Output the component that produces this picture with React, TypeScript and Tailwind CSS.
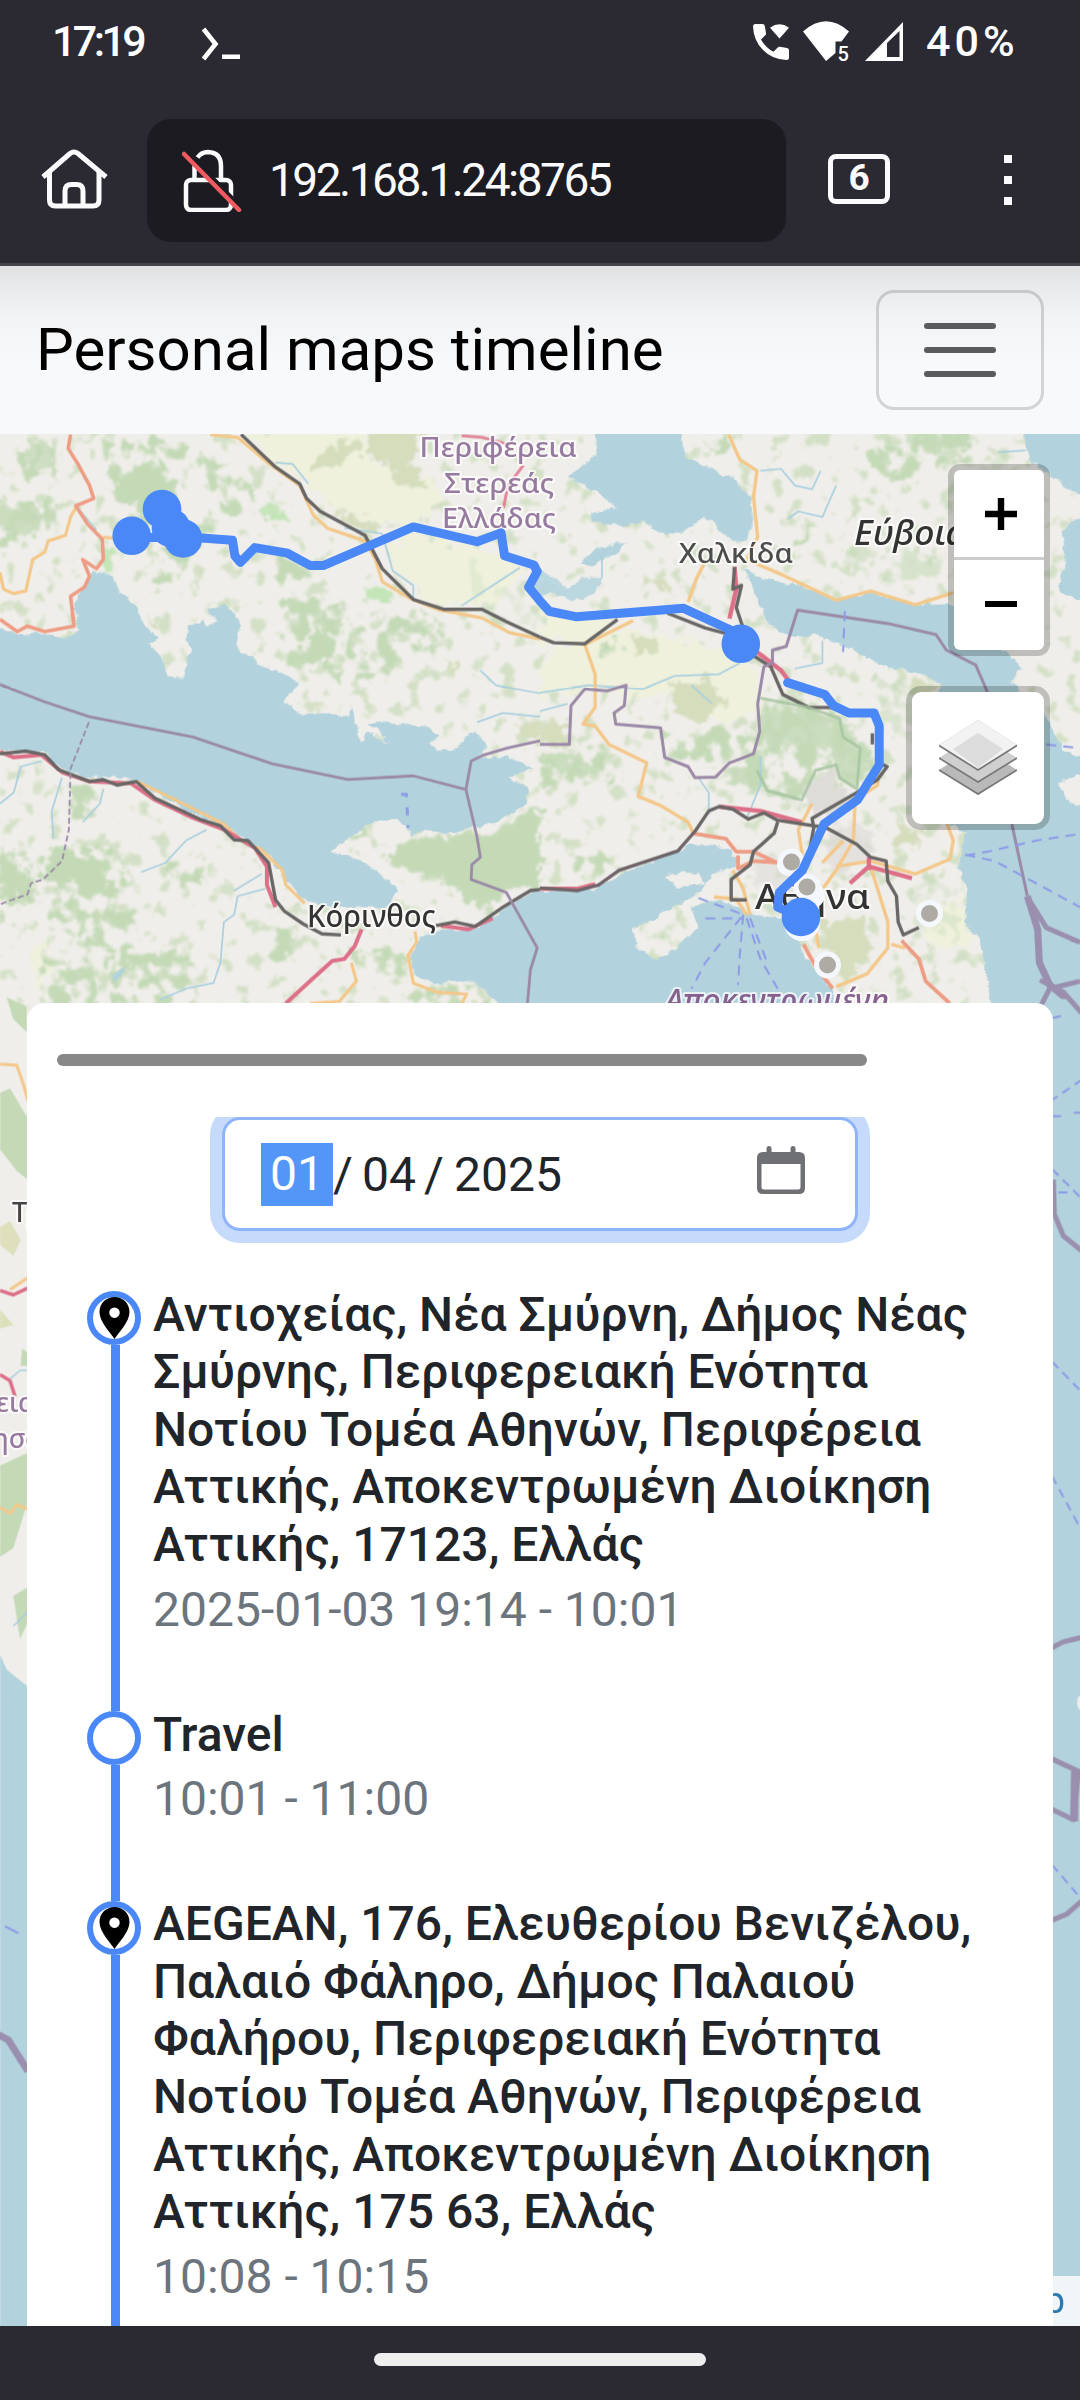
import React from "react";

const WATER = "#b2d2dd";
const LAND = "#f0eeea";
const WOOD = "#c4dab7";
const FIELD = "#eff1dc";
const SCRUB = "#d5ddbd";
const ORANGE = "#f3c88a";
const RED = "#dd7088";
const CORAL = "#ee9d85";
const RAIL = "#696666";
const ADMIN = "#9b89a8";
const FERRY = "#8c9ae8";
const BLUE = "#4b88f7";

type LineProps = { d: string; c: string; w: number; dash?: string; o?: number };

function Line({ d, c, w, dash, o }: LineProps) {
  return (
    <path
      d={d}
      fill="none"
      stroke={c}
      strokeWidth={w}
      strokeDasharray={dash}
      opacity={o}
      strokeLinejoin="round"
      strokeLinecap="butt"
      vectorEffect="non-scaling-stroke"
    />
  );
}

function WestSea() {
  return (
    <g fill={WATER}>
      <path d="M-30 530L0 535L60 555L120 550L190 565L230 540L215 470L250 410L270 385L325 395L345 430L400 480L420 530L465 560L435 575L470 620L485 665L530 670L548 610L560 600L540 570L550 530L590 515L600 535L632 515L605 490L650 472L690 505L700 530L685 550L700 600L740 625L800 650L870 685L820 735L880 770L950 765L1010 775L1022 750L1045 840L1065 820L1130 845L1070 790L1230 800L1275 830L1245 850L1305 872L1380 812L1412 850L1390 885L1480 885L1548 915L1475 940L1530 965L1530 1010L1440 1060L1290 1095L1240 1080L1200 1095L1150 1050L1080 1060L960 1140L1060 1170L1155 1240L1130 1290L1000 1290L890 1280L830 1215L760 1130L650 1070L540 1030L460 985L400 945L350 940L240 940L160 900L130 870L-30 865Z" />
      <path d="M1568 1240L1500 1270L1440 1310L1390 1345L1280 1355L1220 1370L1195 1420L1200 1470L1250 1495L1380 1490L1440 1545L1568 1600Z" />
      <path d="M320 1470L365 1455L350 1480L325 1490Z" />
    </g>
  );
}

function EastSea() {
  return (
    <g fill={WATER}>
      <path d="M160 -20H410L420 70L490 105L560 130L610 180L620 240L600 300L560 300L500 250L470 240L430 270L390 285L330 265L300 245L240 260L150 250L150 225L220 210L170 170L80 125L160 70Z" />
      <path d="M120 360L160 320L250 305L220 335L150 365Z" />
      <path d="M-20 360L50 410L80 430L120 400L180 400L160 440L100 465L40 440L-20 450Z" opacity=".85" />
      <path d="M590 375L640 400L760 425L860 460L960 440L1100 475L1200 470L1300 560L1400 640L1370 680L1400 710L1480 790L1520 870L1600 890V1600H1320L1290 1450L1280 1380L1235 1330L1240 1240L1215 1180L1235 1090L1190 1070L1080 860L1140 760L1160 690L1110 660L1000 640L900 590L800 555L720 560L660 520L625 440Z" />
      <path d="M1400 -20H1600V200L1490 130L1420 80Z" />
      <path d="M1600 210L1515 270L1525 370L1500 430L1600 470Z" />
      <path d="M-20 1245L150 1245L240 1200L370 1150L440 1120L500 1125L560 1135L570 1180L500 1200L470 1240L430 1270L270 1350L280 1400L340 1430L400 1400L460 1340L440 1290L520 1270L620 1310L700 1320L745 1370L770 1430L850 1510L870 1600H-20Z" />
      <path fill={LAND} d="M370 1200L460 1195L480 1225L400 1240Z" />
      <path fill={LAND} d="M1600 925L1500 950L1530 1000L1600 1040Z" />
    </g>
  );
}

function WestLandCover() {
  return (
    <>
      <g fill={FIELD} filter="url(#rough)">
        <path d="M700 0L1060 0L1070 90L1240 130L1290 180L1200 260L1110 260L980 220L900 150L800 90Z" />
        <path d="M1120 320L1200 280L1390 320L1520 370L1440 470L1240 470L1150 380Z" />
        <path d="M90 1400L130 1370L150 1450L110 1520Z" />
      </g>
      <g fill={SCRUB} filter="url(#rough)">
        <path d="M1080 0H1230L1200 100L1240 150L1150 150L1120 80L1060 60Z" />
        <path d="M900 95L960 40L1040 20L1030 70L960 105Z" />
        <path d="M940 225L1040 235L1130 265L1060 270Z" />
        <path d="M430 500L450 510L485 560L460 545Z" />
        <path d="M1280 620L1345 630L1330 645Z" />
        <path d="M1500 800L1568 780V840L1480 820Z" />
      </g>
      <g fill={WOOD} filter="url(#woods)">
        <path d="M70 20H170V120L60 130Z" />
        <path d="M-10 190L160 180L170 250L80 300L-10 310Z" />
        <path d="M240 10H400L520 130L520 220L430 270L370 240L320 110Z" />
        <path d="M450 20L600 60L750 150L740 240L620 200L560 80L440 60Z" />
        <path d="M560 260L640 240L620 300L500 420L440 400L460 330Z" />
        <path d="M770 350L930 360L880 440L770 400Z" />
        <path d="M820 450L1000 460L1000 690L860 650L820 560Z" />
        <path d="M1020 500L1290 500L1300 590L1050 680L1010 600Z" />
        <path d="M-10 1120L90 1130L110 1260L-10 1330Z" />
        <path d="M130 1120H330L410 1260L390 1430L250 1400L110 1270Z" />
        <path d="M130 1410L240 1400L300 1500L280 1568H120Z" />
        <path d="M300 1430L560 1400L580 1530L400 1568H330Z" />
        <path d="M480 1170L600 1160L590 1230L490 1230Z" />
        <path d="M770 1340L870 1340L860 1430L780 1420Z" />
        <path d="M200 960L290 980L280 1060L210 1050Z" />
        <path d="M1370 350L1568 480V540L1400 520Z" opacity=".3" />
        <path d="M1210 1500L1420 1490L1440 1568H1200Z" />
        <path d="M1020 1400L1200 1410L1180 1480L1040 1460Z" />
      </g>
      <g fill={WOOD} filter="url(#rough)">
        <path d="M350 120L430 90L510 140L520 220L450 250L400 200L350 190Z" />
        <path d="M0 215L90 200L150 215L130 270L60 285L0 290Z" opacity=".8" />
        <path d="M80 40L160 30L150 100L80 110Z" opacity=".8" />
        <path d="M1110 1150L1220 1100L1420 1090L1568 1010V1230L1470 1250L1420 1300L1370 1270L1290 1220L1180 1190Z" />
        <path d="M1000 1110L1060 1075L1080 1090L1020 1115Z" />
        <path d="M150 1130L260 1150L330 1240L250 1260L200 1220L130 1230Z" />
        <path d="M0 1180L80 1200L60 1280L0 1270Z" />
        <path d="M900 540L980 570L970 620L900 630L840 610L900 590Z" />
        <path d="M1050 430L1110 410L1150 470L1090 460Z" fill="#c3e5b8" />
        <path d="M760 205L830 210L830 260L770 250Z" fill="#c3e5b8" />
        <path d="M300 300L340 320L320 390L300 370Z" fill="#c3e5b8" />
      </g>
    </>
  );
}

function EastLandCover() {
  return (
    <>
      <g fill={FIELD} filter="url(#rough)">
        <path d="M0 620L180 540L400 560L540 600L620 640L640 760L500 790L400 700L260 720L140 690L0 720Z" />
        <path d="M0 500L220 510L150 570L0 570Z" />
        <path d="M1110 1280L1230 1270L1250 1400L1130 1400Z" />
      </g>
      <g fill={SCRUB} filter="url(#rough)">
        <path d="M390 690L480 670L540 730L470 790L370 760Z" />
        <path d="M270 560L340 560L360 610L280 600Z" />
        <path d="M300 390L380 420L400 445L310 410Z" />
        <path d="M0 800L80 790L80 850L0 850Z" />
        <path d="M1075 670L1160 680L1140 760L1090 720Z" />
        <path d="M820 1330L930 1310L970 1400L900 1490L840 1450Z" />
        <path d="M1040 1070L1110 1080L1080 1130L1030 1120Z" />
      </g>
      <g fill={WOOD} filter="url(#woods)">
        <path d="M480 0H560V60L480 50Z" />
        <path d="M960 40L1250 0L1260 80L1060 130L970 110Z" />
        <path d="M720 250H790V310L720 320Z" />
        <path d="M860 330L1180 300L1170 400L1000 420L860 380Z" opacity=".6" />
        <path d="M0 880L200 850L230 960L0 960Z" />
        <path d="M360 820L620 800L620 900L520 900L380 880Z" />
        <path d="M180 570L260 580L230 640L170 620Z" />
        <path d="M90 1160L220 1150L200 1200L100 1190Z" />
        <path d="M960 660L1160 700L1130 840L1010 820Z" opacity=".5" />
        <path d="M1180 100L1380 60L1400 240L1200 200Z" opacity=".4" />
        <path d="M1060 1220L1240 1210L1220 1400L1100 1350Z" opacity=".4" />
        <path d="M640 710L850 740L990 900L920 990L760 1000L540 960L620 870Z" />
      </g>
      <g fill={WOOD} filter="url(#rough)" opacity=".85">
        <path d="M640 750L740 760L850 780L920 850L960 900L920 970L880 950L850 910L830 860L740 850L650 880Z" />
        <path d="M540 940L610 890L660 960L750 1000L650 980Z" />
        <path d="M960 60L1010 40L1030 90L970 100Z" />
        <path d="M1110 20L1240 20L1220 60L1120 60Z" />
        <path d="M10 890L100 880L190 930L60 930Z" />
        <path d="M330 1350L390 1340L370 1390L320 1380Z" opacity=".6" />
      </g>
      <g fill="#dedcd8" filter="url(#rough)">
        <path d="M770 960L860 900L850 950L900 1000L800 1060Z" />
        <path d="M860 1060L960 1080L980 1140L900 1200L820 1180Z" opacity=".7" />
        <path d="M620 1130L720 1160L820 1280L800 1340L690 1290L620 1220Z" opacity=".6" />
      </g>
    </>
  );
}

function WestRoads() {
  return (
    <>
      <Line c="#a9cfdf" w={1.7} d="M800 88L850 92L895 145M1000 265L1110 280L1140 380L1200 420V460M1340 475L1510 372M1395 650L1440 690L1568 712M1385 790L1460 765L1568 775M120 895L60 910L40 980L0 1010M180 940L150 1030L155 1105M300 970L290 1010L240 1060M600 1080L540 1110L480 1170L410 1195M770 1240L690 1260L680 1310L650 1330L640 1440L620 1495L540 1510L465 1540M760 1200L680 1245M225 210L280 270" />
      <Line c={ORANGE} w={3.2} d="M0 385L10 430L40 442L75 435L95 350L130 330L140 300L190 285L205 235L220 210M610 12L690 20L780 90L870 150L910 230L950 265L1060 300L1090 350L1110 410L1190 455L1270 485L1400 508L1480 548L1568 565M300 290L440 300M400 950L520 1005L650 1065L700 1110L760 1135L820 1190L830 1230L885 1280M1205 1355L1210 1385L1185 1420L1200 1495L1270 1520L1355 1525L1330 1568M1020 1440L1035 1490L985 1545L900 1550" />
      <Line c={CORAL} w={3.6} d="M205 12L198 50L225 90L260 150L272 185L220 205L255 255L297 295L300 350L280 375L240 350L260 395L245 425L205 450L215 530L130 545L80 530L50 545L0 512" />
      <Line c={RED} w={4} d="M0 870L40 885L120 878L180 925L260 950L380 955L450 1000L560 1048L650 1080L740 1130L775 1180L775 1230L800 1290M1050 1350L1030 1395L1000 1430L965 1435L900 1490L830 1550M1280 1340L1360 1350L1430 1320" />
      <Line c={RAIL} w={3.4} d="M700 12L800 100L870 145L890 185L930 220L1060 285L1110 375L1200 458L1290 485L1400 485L1470 518L1568 560M0 875L75 868L130 878L170 918L260 950L300 945L340 960L395 950L450 995L580 1052L640 1070L680 1108L720 1110L780 1170L800 1270L825 1300L880 1335L935 1362L990 1365M1265 1340L1320 1330L1380 1342L1460 1290L1540 1245L1568 1242" />
      <Line c={ADMIN} w={2.8} d="M0 688L130 735L260 775L560 830L790 902L1010 945L1200 935L1353 972L1368 895L1400 880L1480 858L1568 840M1353 972L1385 1100L1395 1155L1370 1175L1368 1215L1470 1250L1560 1400L1540 1460L1530 1568" />
      <Line c={ADMIN} w={1.8} dash="6 3" d="M258 790L205 915L200 1080L180 1165L125 1215L90 1225L80 1255L0 1282" />
      <Line c={FERRY} w={3} dash="8 10" d="M1165 985H1180L1185 1075" />
      <Line c={RED} w={3} d="M1340 15L1400 20L1480 40M1520 95L1475 150L1462 210" o={0.8} />
    </>
  );
}

function EastRoads() {
  return (
    <>
      <Line c="#a9cfdf" w={1.7} d="M640 110L700 105L740 150L790 160L815 110M860 150L820 235L750 220L720 240M1330 60L1410 55M0 710L140 690L300 700L390 665L520 660L580 630M440 690L500 740M0 760L80 740M820 570V630L740 645M460 940L490 980V1040M640 880V960L600 1050M180 340V400" />
      <Line c={ORANGE} w={3.4} d="M548 12L580 80L630 110L620 180L632 290L600 350L700 390L860 460L960 435L1090 472L1200 440M480 355L455 400L430 465M270 515L130 580L160 660V750L125 795L160 800L200 850L310 900L285 990L350 1015L430 1060L445 1090M985 910L980 960L915 1000L910 1110L860 1190L790 1280M790 1010L750 1080L770 1200L790 1300L810 1400M880 1110L820 1170M860 1180L960 1165L1090 1200L1190 1160L1200 1110L1180 1060M960 1180L1010 1330V1400L950 1470L860 1505M560 1190L590 1240L610 1310M505 1262L570 1268L600 1310M1060 1400L1020 1390" />
      <Line c={CORAL} w={3.8} d="M440 1090L540 1105L570 1140L620 1140L700 1175M575 1150V1185L620 1165L700 1170M765 1390L800 1450L850 1510M1050 1380L1100 1430L1120 1490L1190 1550" />
      <Line c={RED} w={4.4} d="M565 370L570 430L550 510M630 600L700 650L720 675M520 1018L640 1030L760 1060M0 1240L110 1240L160 1228M900 1225L955 1180L1080 1212M955 1155V1190" />
      <Line c={RAIL} w={3.4} d="M565 370L560 430L585 420L570 480L588 530M370 495L480 535L540 550M0 560L40 575L130 578L225 512M620 610L670 640L705 715L780 750L850 750M965 820V850M985 900L1008 910L980 945L920 980L790 1050L795 1075L780 1150M0 1238L110 1245L170 1230L230 1190L400 1138L450 1085L490 1030L520 1018L560 1025L605 1052L650 1035L690 1055L830 1075L920 1120L960 1155L1005 1165L1010 1220L1035 1260L1040 1330L1055 1365L1100 1345M690 1060L680 1090L620 1140L610 1175L555 1215V1270H600" />
      <Line c="#73646b" w={2} d="M0 1238L110 1245L170 1230L230 1190L400 1138L450 1085" />
      <Line c={ADMIN} w={3} d="M0 850L85 850L90 745L130 700L195 705L250 690L245 745L215 765L220 795L350 805L362 885L430 910L450 940L510 938L550 900L620 875L638 815L632 740L650 640L675 630V595L715 585L748 487L1020 525L1150 553L1180 595L1265 635L1300 710M1370 1065L1415 1260" />
      <Line c="#a6c4a0" w={3} o={0.8} d="M640 725L780 750L870 780L880 830L930 860L920 970L870 940L860 905L800 920L760 1000L660 975L630 920" />
      <Line c="#9a8fae" w={7} d="M1415 1260L1445 1350L1450 1440L1480 1500L1568 1568" />
      <Line c="#9a8fae" w={5} d="M1420 1270L1470 1345L1568 1385M1568 1490L1480 1510L1448 1568" />
      <Line c={FERRY} w={2} dash="10 7" d="M1235 1150L1300 1140L1440 1110L1568 1092M1235 1148L1320 1165L1450 1230L1568 1290M460 1265L590 1310L480 1440L440 1510M590 1310L580 1420L575 1500M600 1320L640 1430L690 1510M610 1320L660 1440M480 1320H590M1470 850L1568 860M885 490L880 600" />
    </>
  );
}

function MapLabels() {
  return (
    <g
      fontFamily="'Noto Sans', sans-serif"
      fontWeight="500"
      stroke="#ffffff"
      strokeOpacity=".7"
      strokeWidth="4"
      strokeLinejoin="round"
      paintOrder="stroke"
    >
      <g fill="#977a9f" fontSize="27" textAnchor="middle">
        <text x="498" y="457" textLength="157" lengthAdjust="spacingAndGlyphs">Περιφέρεια</text>
        <text x="499" y="493" textLength="110" lengthAdjust="spacingAndGlyphs">Στερεάς</text>
        <text x="499" y="528" textLength="114" lengthAdjust="spacingAndGlyphs">Ελλάδας</text>
      </g>
      <text x="679" y="563" fill="#4c4c4c" fontSize="27" textLength="114" lengthAdjust="spacingAndGlyphs">Χαλκίδα</text>
      <text x="854" y="545" fill="#333" fontSize="34" fontStyle="italic" textLength="112" lengthAdjust="spacingAndGlyphs">Εύβοια</text>
      <text x="307" y="927" fill="#333" fontSize="30" textLength="129" lengthAdjust="spacingAndGlyphs">Κόρινθος</text>
      <text x="755" y="909" fill="#333" fontSize="35" textLength="115" lengthAdjust="spacingAndGlyphs">Αθήνα</text>
      <text x="665" y="1011" fill="#86618f" fontSize="30" fontStyle="italic" textLength="224" lengthAdjust="spacingAndGlyphs">Αποκεντρωμένη</text>
      <text x="12" y="1222" fill="#444" fontSize="27">Τρ</text>
      <text x="-4" y="1412" fill="#977a9f" fontSize="27">εια</text>
      <text x="-8" y="1448" fill="#977a9f" fontSize="27">ησσ</text>
    </g>
  );
}

function MapCanvas() {
  return (
    <svg className="absolute inset-0 h-full w-full" viewBox="0 434 1080 1892">
      <defs>
        <filter id="coast" x="-5%" y="-5%" width="110%" height="110%">
          <feTurbulence type="fractalNoise" baseFrequency=".035" numOctaves="3" seed="4" />
          <feDisplacementMap in="SourceGraphic" scale="22" xChannelSelector="R" yChannelSelector="G" />
        </filter>
        <filter id="rough" x="-10%" y="-10%" width="120%" height="120%">
          <feTurbulence type="fractalNoise" baseFrequency=".03" numOctaves="4" seed="9" result="n" />
          <feDisplacementMap in="SourceGraphic" in2="n" scale="70" xChannelSelector="R" yChannelSelector="G" />
          <feGaussianBlur stdDeviation="3" />
        </filter>
        <filter id="woods" x="-10%" y="-10%" width="120%" height="120%">
          <feTurbulence type="fractalNoise" baseFrequency=".02" numOctaves="4" seed="3" result="n" />
          <feColorMatrix in="n" type="matrix" values="0 0 0 0 0 0 0 0 0 0 0 0 0 0 0 8 0 0 0 -3.6" result="m" />
          <feDisplacementMap in="SourceGraphic" in2="n" scale="70" xChannelSelector="R" yChannelSelector="G" result="s" />
          <feComposite in="s" in2="m" operator="in" />
          <feGaussianBlur stdDeviation="3" />
        </filter>
        <filter id="speckle" x="0" y="0" width="100%" height="100%">
          <feTurbulence type="fractalNoise" baseFrequency=".022" numOctaves="4" seed="21" result="n" />
          <feColorMatrix in="n" type="matrix" values="0 0 0 0 0 0 0 0 0 0 0 0 0 0 0 0 8 0 0 -4.7" result="m" />
          <feComposite in="SourceGraphic" in2="m" operator="in" />
          <feGaussianBlur stdDeviation="3" />
        </filter>
      </defs>

      <rect y="434" width="1080" height="1892" fill={LAND} />

      <g transform="translate(0 430) scale(.34439 .36990)">
        <rect width="3136" height="1700" fill="#d3e0c6" filter="url(#speckle)" />
        <WestLandCover />
        <g transform="translate(1568 0)">
          <EastLandCover />
        </g>
        <g filter="url(#coast)">
          <WestSea />
          <g transform="translate(1568 0)">
            <EastSea />
          </g>
        </g>
        <WestRoads />
        <g transform="translate(1568 0)">
          <EastRoads />
        </g>
      </g>

      {/* western margin below the visible map area */}
      <g transform="translate(0 980) scale(.33333 .86735)">
        <rect y="30" width="84" height="800" fill={LAND} />
        <g fill={WOOD}>
          <path d="M20 20L80 30V60L40 45ZM0 130L30 125L84 160V230L50 220L0 195ZM0 560L84 545V600L40 655L0 665ZM66 425L84 430V445H62ZM40 710L84 700V740L60 760Z" />
          <path fill="#dde0ba" d="M0 285L30 278L62 300L40 318L0 305ZM0 380L40 398L0 402Z" />
        </g>
        <path d="M0 778L20 795L84 815V1556H0Z" fill={WATER} />
        <Line c={ORANGE} w={3} d="M0 97L50 98L70 120L84 140M30 357L84 343M0 608L30 615L50 605L84 610" />
        <Line c={RED} w={3.5} d="M0 358L40 363L84 355M0 455L30 462L45 480" />
        <Line c="#a9cfdf" w={1.5} d="M30 460L60 450H84M40 745L84 728" />
        <Line c={FERRY} w={2} d="M15 1091L55 1099" />
        <Line c="#9a8fae" w={7} d="M-5 1216L25 1222L84 1258" />
      </g>

      {/* eastern margin */}
      <g transform="translate(1030 980) scale(.33333 .86735)">
        <rect x="60" y="22" width="95" height="1534" fill={WATER} />
        <Line c="#9a8fae" w={5} d="M30 0L100 14L155 38M70 230L73 270L100 295L155 312M60 771L100 763L155 758M60 897L155 914M60 955L130 968L145 915M60 1085L110 1077L155 1062" />
        <Line c="#9a8fae" w={8} d="M135 912L132 970" />
        <Line c={FERRY} w={2} dash="9 6" d="M66 44L105 40M60 140L155 115M66 157H100M132 153H155M66 218L155 252M85 245H130M66 440L155 475M66 572L155 635M66 1020L155 1060" />
        <ellipse cx="150" cy="833" rx="9" ry="8" fill={LAND} />
      </g>

      <g fill="#aeaba5" stroke="#f4f7fc" strokeWidth="5">
        <circle cx="789" cy="864" r="12" stroke="none" fill="#f4f7fc" />
        <circle cx="791.5" cy="862" r="11" />
        <circle cx="929.5" cy="913.5" r="11" />
        <circle cx="827.5" cy="965" r="11" />
      </g>
      <MapLabels />
      <circle cx="812" cy="895" r="13" fill="#f4f7fc" />
      <circle cx="807" cy="887" r="11" fill="#aeaba5" stroke="#f4f7fc" strokeWidth="5" />
      <circle cx="802" cy="923" r="18" fill="#f4f7fc" />

      <g transform="translate(0 430) scale(.34439 .36990)" strokeLinecap="round">
        <path
          fill="none"
          stroke={BLUE}
          strokeWidth="9"
          strokeLinejoin="round"
          vectorEffect="non-scaling-stroke"
          d="M380 290L585 292L675 298L682 340L698 358L740 318L835 333L900 366L940 366L1200 262L1385 302L1455 278L1465 340L1550 365L1560 382L1535 425L1568 462L1595 490L1675 505L1985 482L2120 540L2150 578M2287 683L2395 715L2420 745L2465 765L2538 765L2553 800V905L2490 1000L2393 1065L2330 1190L2263 1250L2258 1290L2326 1316"
        />
      </g>
      <g fill={BLUE}>
        <circle cx="131.7" cy="535.8" r="19.3" />
        <circle cx="162" cy="509" r="19.3" />
        <circle cx="171" cy="528" r="19.3" />
        <circle cx="183" cy="538.5" r="19.3" />
        <circle cx="740.8" cy="643.8" r="19.3" />
        <circle cx="801" cy="917" r="19.3" />
      </g>
    </svg>
  );
}

function StatusBar() {
  return (
    <div className="flex h-[83px] items-center text-[43px] font-medium leading-[83px] text-white">
      <span className="ml-[52px] w-[149px] tracking-[-3.6px]">17:19</span>
      <svg className="mt-[4px] h-[34px] w-[39px]" viewBox="0 0 39 34">
        <path d="M2.5 2L14.5 17L2.5 32" fill="none" stroke="#fff" strokeWidth="4.6" />
        <rect x="21" y="27.500" width="18" height="4.500" fill="#fff" />
      </svg>
      <svg className="ml-[513px] h-[36px] w-[36px]" viewBox="0 0 36 36" fill="#fff">
        <path d="M2 0H9.500Q11.500 0 11.800 2L13 9Q13.200 10.500 12 11.600L8 15.500Q12.500 23.500 20.500 27.800L24.500 23.700Q25.500 22.600 27 22.800L34 24Q36 24.400 36 26.300V33.500Q36 36 33.500 36Q19 35.500 9.500 25.500Q.5 16 0 2.500Q0 0 2 0Z" />
        <path d="M17 3.700Q26.500-3 36 3.700L26.500 14.500Z" />
      </svg>
      <svg className="ml-[14px] h-[41px] w-[47px] overflow-visible" viewBox="0 0 47 41" fill="#fff">
        <path d="M0 10.500Q23-10 46 10.500L38.500 20.500H32.500V32L23 40Z" />
        <path d="M23 40L30 31V23Z" />
        <text x="34.500" y="39.500" fontSize="20" fontWeight="500" fontFamily="Roboto, sans-serif">5</text>
      </svg>
      <svg className="ml-[15px] h-[41px] w-[39px]" viewBox="0 0 39 41">
        <path fillRule="evenodd" fill="#fff" d="M38 1V40H0ZM34.500 10V36H22V22Z" />
      </svg>
      <span className="ml-[22px] tracking-[4px]">40%</span>
    </div>
  );
}

function Toolbar() {
  return (
    <div className="flex h-[180px] items-start">
      <svg className="ml-[41px] mt-[66px] h-[60px] w-[67px]" viewBox="0 0 67 60" fill="none" stroke="#fbfbfe" strokeWidth="5">
        <path d="M2 28L29 4.500Q33 1.500 37 4.500L65 28" />
        <path d="M8.500 22V51Q8.500 57 14.500 57H52Q58 57 58 51V22" />
        <path d="M24 57V42Q24 35.500 30.500 35.500H35.500Q42 35.500 42 42V57" />
      </svg>
      <div className="ml-[39px] mt-[36px] flex h-[123px] w-[639px] items-center rounded-[24px] bg-[#1c1b21]">
        <svg className="ml-[35px] h-[63px] w-[60px]" viewBox="0 0 60 63" fill="none" stroke="#fbfbfe">
          <path strokeWidth="4.500" d="M15.500 8.500Q19.500 3 26 3Q39 3.500 39 17V31M12.500 17V30" />
          <rect x="4" y="31" width="45" height="30" rx="5" strokeWidth="4.500" />
          <path d="M5 3L60 60" stroke="#1c1b21" strokeWidth="5" />
          <path d="M2 5L57 61" stroke="#f05a61" strokeWidth="4.500" strokeLinecap="round" />
        </svg>
        <span className="ml-[27px] text-[46px] tracking-[-2.5px] text-[#fbfbfe]">192.168.1.24:8765</span>
      </div>
      <div className="ml-[42px] mt-[71px] flex h-[50px] w-[62px] items-center justify-center rounded-[8px] border-[5px] border-[#fbfbfe] pb-[3px] text-[37px] font-bold leading-none text-[#fbfbfe]">
        6
      </div>
      <div className="ml-[114px] mt-[72px] flex flex-col gap-[13px]">
        <i className="h-2 w-2 bg-[#fbfbfe]" />
        <i className="h-2 w-2 bg-[#fbfbfe]" />
        <i className="h-2 w-2 bg-[#fbfbfe]" />
      </div>
    </div>
  );
}

function NavBar() {
  return (
    <div className="flex h-[168px] items-center justify-between bg-[#f8f9fb] bg-[linear-gradient(to_bottom,#e0e1e2_0,#e9eaeb_20px,#f2f3f5_52px,#f8f9fb_95px)] px-[36px]">
      <span className="text-[60px] leading-none text-black">Personal maps timeline</span>
      <div className="flex h-[120px] w-[168px] flex-col items-center justify-center gap-[18px] rounded-[18px] border-[3px] border-black/15">
        <i className="h-[6px] w-[72px] rounded-[3px] bg-[#5a5b5f]" />
        <i className="h-[6px] w-[72px] rounded-[3px] bg-[#5a5b5f]" />
        <i className="h-[6px] w-[72px] rounded-[3px] bg-[#5a5b5f]" />
      </div>
    </div>
  );
}

function MapControls() {
  return (
    <div className="absolute right-[30px] top-[30px] flex flex-col items-end gap-[30px]">
      <div className="flex h-[192px] w-[102px] flex-col rounded-[12px] border-[6px] border-black/20 bg-white bg-clip-padding">
        <div className="flex h-[90px] items-center justify-center border-b-[3px] border-[#ccc] pl-[3px]">
          <svg className="h-[32px] w-[32px]" viewBox="0 0 32 32">
            <path d="M0 16H32M16 0V32" stroke="#000" strokeWidth="6.400" />
          </svg>
        </div>
        <div className="flex h-[88px] items-center justify-center pl-[3px]">
          <i className="h-[6px] w-[32px] bg-black" />
        </div>
      </div>
      <div className="flex h-[144px] w-[144px] items-center justify-center rounded-[15px] border-[6px] border-black/20 bg-white bg-clip-padding">
        <svg className="h-[76px] w-[78px]" viewBox="0 0 78 76">
          <path d="M0 50L39 25L78 50L39 75Z" fill="#b9b9b9" />
          <path d="M0 50L39 74L78 50" fill="none" stroke="#777" strokeWidth="1.500" />
          <path d="M0 38L39 13L78 38L39 62Z" fill="#cfcfcf" />
          <path d="M0 38L39 62L78 38" fill="none" stroke="#777" strokeWidth="1.500" />
          <path d="M0 25L39 0L78 25L39 50Z" fill="#f2f2f2" stroke="#ddd" strokeWidth=".6" />
          <path d="M14 29L39 13L64 29L39 48Z" fill="#dcdcdc" />
          <path d="M0 25.500L39 50L78 25.500" fill="none" stroke="#777" strokeWidth="1.700" />
        </svg>
      </div>
    </div>
  );
}

function DateField() {
  return (
    <div className="mx-auto mt-[51px] h-[129px] w-[660px] overflow-hidden px-[12px]">
      <div className="flex h-[114px] items-center rounded-[18px] border-[3px] border-[#90b4f9] bg-white pl-[36px] text-[48px] text-[#212529] shadow-[0_0_0_12px_#c6dafc]">
        <span className="flex h-[63px] w-[72px] items-center justify-center bg-[#5396f8] text-white">01</span>
        <span className="w-[29px] pt-px">/</span>
        <span className="w-[62px] pt-px">04</span>
        <span className="w-[30px] pt-px">/</span>
        <span className="pt-px">2025</span>
        <svg className="ml-auto mr-[50px] mb-[8px] h-[48px] w-[48px]" viewBox="0 0 48 48">
          <rect x="9.500" width="5" height="9" rx="2.500" fill="#6f7074" />
          <rect x="33.500" width="5" height="9" rx="2.500" fill="#6f7074" />
          <path fillRule="evenodd" fill="#6f7074" d="M6 6H42Q48 6 48 12V42Q48 48 42 48H6Q0 48 0 42V12Q0 6 6 6ZM4.500 18V41Q4.500 43.500 7 43.500H41Q43.500 43.500 43.500 41V18Z" />
        </svg>
      </div>
    </div>
  );
}

const stops = [
  {
    pin: true,
    lines: [
      "Αντιοχείας, Νέα Σμύρνη, Δήμος Νέας",
      "Σμύρνης, Περιφερειακή Ενότητα",
      "Νοτίου Τομέα Αθηνών, Περιφέρεια",
      "Αττικής, Αποκεντρωμένη Διοίκηση",
      "Αττικής, 17123, Ελλάς",
    ],
    time: "2025-01-03 19:14 - 10:01",
  },
  { pin: false, lines: ["Travel"], time: "10:01 - 11:00" },
  {
    pin: true,
    lines: [
      "AEGEAN, 176, Ελευθερίου Βενιζέλου,",
      "Παλαιό Φάληρο, Δήμος Παλαιού",
      "Φαλήρου, Περιφερειακή Ενότητα",
      "Νοτίου Τομέα Αθηνών, Περιφέρεια",
      "Αττικής, Αποκεντρωμένη Διοίκηση",
      "Αττικής, 175 63, Ελλάς",
    ],
    time: "10:08 - 10:15",
  },
];

function Timeline() {
  return (
    <div className="mt-[39px] pl-[60px]">
      {stops.map((stop, index) => (
        <div key={index} className="flex">
          <div className="flex w-[54px] shrink-0 flex-col items-center">
            {index === 0 ? (
              <div className="h-[6px] shrink-0" />
            ) : (
              <div className="ml-[3px] h-[6px] w-[9px] shrink-0 bg-[#4b88f7]" />
            )}
            <div className="flex h-[54px] w-[54px] shrink-0 items-center justify-center rounded-full border-[6px] border-[#4b88f7] bg-white">
              {stop.pin && (
                <svg className="h-[42px] w-[31px]" viewBox="0 0 31 42">
                  <path
                    fillRule="evenodd"
                    d="M15.500 0C7 0 .5 6.500 .5 15C.5 25 11 35 15.500 42C20 35 30.500 25 30.500 15C30.500 6.500 24 0 15.500 0ZM15.500 10.500A5.200 5.200 0 1 1 15.490 10.500Z"
                  />
                </svg>
              )}
            </div>
            <div className="ml-[3px] w-[9px] grow bg-[#4b88f7]" />
          </div>
          <div className="whitespace-nowrap pb-[59.4px] pl-[12px] pt-[0.6px] text-[48px]">
            {stop.lines.map((line) => (
              <div key={line} className="font-medium leading-[57.6px] text-[#212529]">
                {line}
              </div>
            ))}
            <div className="leading-[72px] text-[#6c757d]">{stop.time}</div>
          </div>
        </div>
      ))}
    </div>
  );
}

export default function App() {
  return (
    <div className="flex h-[2400px] w-[1080px] flex-col overflow-hidden bg-[#2b2a33] font-[Roboto,sans-serif]">
      <StatusBar />
      <Toolbar />
      <div className="h-[3px] shrink-0 bg-[#45424c]" />
      <NavBar />
      <main className="relative h-[1892px] shrink-0 overflow-hidden">
        <MapCanvas />
        <MapControls />
        <div className="absolute bottom-0 right-0 flex h-[50px] items-center bg-white/80 pl-4 pr-[15px] text-[36px] text-[#2a7ab0]">
          OpenStreetMap
        </div>
        <section className="relative mx-[27px] mt-[569px] h-[1323px] overflow-hidden rounded-t-[18px] bg-white pt-[51px]">
          <div className="ml-[30px] h-[12px] w-[810px] rounded-[6px] bg-[#888]" />
          <DateField />
          <Timeline />
        </section>
      </main>
      <div className="flex h-[74px] shrink-0 justify-center pt-[27px]">
        <div className="h-[13px] w-[332px] rounded-full bg-[#eee]" />
      </div>
    </div>
  );
}
